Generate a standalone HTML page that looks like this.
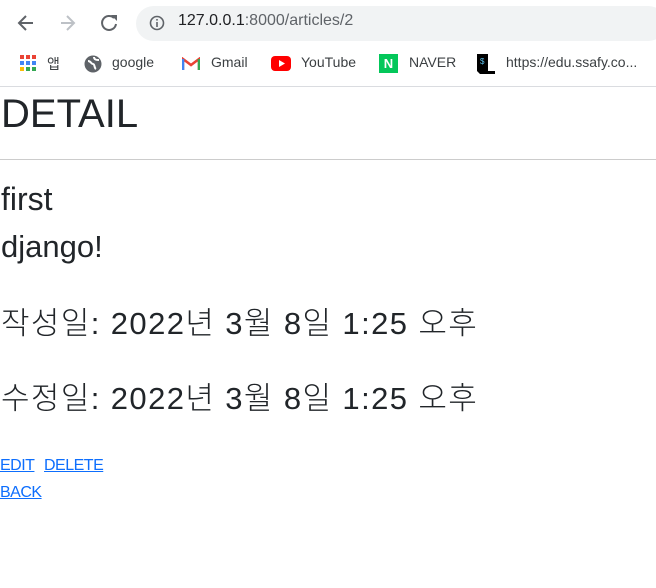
<!DOCTYPE html>
<html><head><meta charset="utf-8"><style>
body{margin:0;width:656px;height:588px;overflow:hidden;background:#fff;font-family:"Liberation Sans","Noto Sans CJK KR",sans-serif;position:relative}
.url{position:absolute;left:136px;top:6px;width:530px;height:35px;border-radius:18px;background:#f1f3f4}
.urltext{position:absolute;left:178px;top:12px;font-size:16px;color:#202124}
.urltext span{color:#5f6368}
.bm{position:absolute;top:54px;font-size:14px;color:#3c4043}
.hr1{position:absolute;left:0;top:86px;width:656px;height:1px;background:#dadce0}
.h1{position:absolute;left:1px;top:92px;font-size:40px;color:#212529;font-weight:300}
.hr2{position:absolute;left:0;top:159px;width:656px;height:1px;background:#ccc}
.t{position:absolute;left:1px;font-size:32px;color:#212529;font-weight:300}
a{position:absolute;color:#0d6efd;text-decoration:underline;font-size:16px;letter-spacing:-0.5px}
</style></head><body>
<svg style="position:absolute;left:16px;top:12px" width="110" height="22" viewBox="0 0 110 22">
<path d="M17 11H4M10 4L3 11l7 7" stroke="#5f6368" stroke-width="2" fill="none"/>
<path d="M45 11h13M51 4l7 7-7 7" stroke="#bdc1c6" stroke-width="2" fill="none"/>
<path d="M98 6a7 7 0 1 0 2 6" stroke="#5f6368" stroke-width="2" fill="none"/><path d="M95 3h6v6z" fill="#5f6368"/>
</svg>
<div class="url"></div>
<svg style="position:absolute;left:149px;top:15px" width="16" height="16"><circle cx="8" cy="8" r="6.5" stroke="#5f6368" stroke-width="1.6" fill="none"/><rect x="7.2" y="7" width="1.6" height="5" fill="#5f6368"/><rect x="7.2" y="4" width="1.6" height="1.6" fill="#5f6368"/></svg>
<div class="urltext">127.0.0.1<span>:8000/articles/2</span></div>
<svg style="position:absolute;left:20px;top:55px" width="16" height="16">
<g fill="#ea4335"><rect x="0" y="0" width="4" height="4"/><rect x="6" y="0" width="4" height="4"/><rect x="12" y="0" width="4" height="4"/></g>
<g fill="#4285f4"><rect x="0" y="6" width="4" height="4"/><rect x="6" y="6" width="4" height="4"/><rect x="12" y="6" width="4" height="4"/></g>
<g fill="#fbbc05"><rect x="0" y="12" width="4" height="4"/></g><g fill="#34a853"><rect x="6" y="12" width="4" height="4"/><rect x="12" y="12" width="4" height="4"/></g></svg>
<div class="bm" style="left:47px">앱</div>
<svg style="position:absolute;left:84px;top:55px" width="18" height="18"><circle cx="9" cy="9" r="8.5" fill="#5f6368"/><path d="M4 6c3 0 3 3 5 3s1 4 3 5M10 2c0 3 3 3 5 3" stroke="#fff" stroke-width="2" fill="none"/></svg>
<div class="bm" style="left:112px">google</div>
<svg style="position:absolute;left:182px;top:57px" width="18" height="14"><path d="M1 13V2l8 6 8-6v11" stroke="#ea4335" stroke-width="2.5" fill="none"/><path d="M1 13V2" stroke="#4285f4" stroke-width="2.5"/><path d="M17 13V2" stroke="#34a853" stroke-width="2.5"/></svg>
<div class="bm" style="left:211px">Gmail</div>
<svg style="position:absolute;left:271px;top:56px" width="20" height="15"><rect width="20" height="15" rx="4" fill="#f00"/><path d="M8 4v7l6-3.5z" fill="#fff"/></svg>
<div class="bm" style="left:301px">YouTube</div>
<div style="position:absolute;left:379px;top:54px;width:19px;height:19px;background:#03c75a;color:#fff;font:bold 13px 'Liberation Sans';text-align:center;line-height:19px">N</div>
<div class="bm" style="left:409px">NAVER</div>
<svg style="position:absolute;left:476px;top:54px" width="20" height="20"><path d="M1 0h11v17h7v3H4L1 17z" fill="#000"/><text x="4" y="10" font-size="8" fill="#5bc0eb" font-family="Liberation Sans">$</text></svg>
<div class="bm" style="left:506px">https://edu.ssafy.co...</div>
<div class="hr1"></div>
<div class="h1">DETAIL</div>
<div class="hr2"></div>
<div class="t" style="top:181px">first</div>
<div class="t" style="top:229px;font-size:31px">django!</div>
<div class="t" style="top:298px;font-size:31px;letter-spacing:1.4px">작성일: 2022년 3월 8일 1:25 오후</div>
<div class="t" style="top:373px;font-size:31px;letter-spacing:1.4px">수정일: 2022년 3월 8일 1:25 오후</div>
<a style="left:0;top:457px">EDIT</a>
<a style="left:44px;top:457px">DELETE</a>
<a style="left:0;top:484px">BACK</a>
</body></html>
